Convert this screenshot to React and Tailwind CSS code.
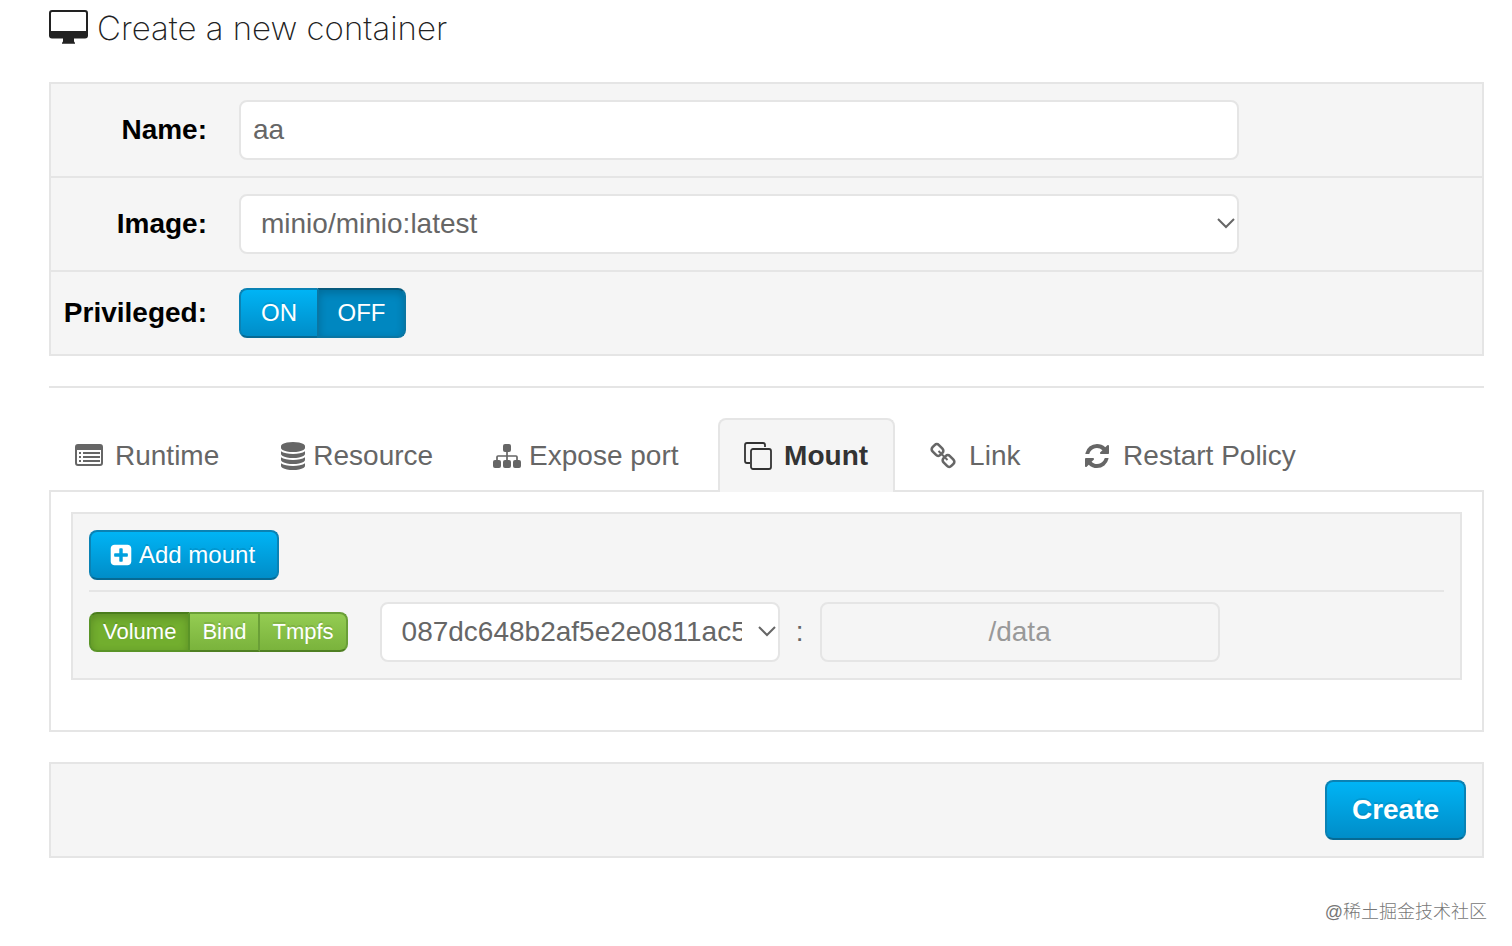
import React, { useState } from 'react';
import clsx from 'clsx';

const paths = {
  database: 'M896 768q237 0 443-43t325-127v170q0 69-103 128t-280 93.5-385 34.5-385-34.5-280-93.5-103-128v-170q119 84 325 127t443 43zm0 768q237 0 443-43t325-127v170q0 69-103 128t-280 93.5-385 34.5-385-34.5-280-93.5-103-128v-170q119 84 325 127t443 43zm0-384q237 0 443-43t325-127v170q0 69-103 128t-280 93.5-385 34.5-385-34.5-280-93.5-103-128v-170q119 84 325 127t443 43zm0-1152q208 0 385 34.5t280 93.5 103 128v128q0 69-103 128t-280 93.5-385 34.5-385-34.5-280-93.5-103-128v-128q0-69 103-128t280-93.5 385-34.5z',
  refresh: 'M1639 1056q0 5-1 7-64 268-268 434.5t-478 166.5q-146 0-282.5-55t-243.5-157l-129 129q-19 19-45 19t-45-19-19-45v-448q0-26 19-45t45-19h448q26 0 45 19t19 45-19 45l-137 137q71 66 161 102t187 36q134 0 250-65t186-179q11-17 53-117 8-23 30-23h192q13 0 22.5 9.5t9.5 22.5zm25-800v448q0 26-19 45t-45 19h-448q-26 0-45-19t-19-45 19-45l138-138q-148-137-349-137-134 0-250 65t-186 179q-11 17-53 117-8 23-30 23h-199q-13 0-22.5-9.5t-9.5-22.5v-7q65-268 270-434.5t480-166.5q146 0 284 55.5t245 156.5l130-129q19-19 45-19t45 19 19 45z',
  plus: 'M1408 960v-128q0-26-19-45t-45-19h-320v-320q0-26-19-45t-45-19h-128q-26 0-45 19t-19 45v320h-320q-26 0-45 19t-19 45v128q0 26 19 45t45 19h320v320q0 26 19 45t45 19h128q26 0 45-19t19-45v-320h320q26 0 45-19t19-45zm256-544v960q0 119-84.5 203.5t-203.5 84.5h-960q-119 0-203.5-84.5t-84.5-203.5v-960q0-119 84.5-203.5t203.5-84.5h960q119 0 203.5 84.5t84.5 203.5z',
};

const Glyph = ({ name, className }) => (
  <svg className={className} viewBox="0 0 1792 1792" fill="currentColor" aria-hidden="true">
    <path d={paths[name]} />
  </svg>
);

const DesktopIcon = () => (
  <svg className="w-10 h-9" viewBox="0 0 40 36" fill="#222" aria-hidden="true">
    <path fillRule="evenodd" d="M3 0h33a3 3 0 0 1 3 3v22.500a3 3 0 0 1-3 3H25v2.500q0 1 1 1.700v1H13v-1q1-.7 1-1.700v-2.500H3a3 3 0 0 1-3-3V3a3 3 0 0 1 3-3zM3.200 2Q2 2 2 3.200V21h35V3.200Q37 2 35.800 2z" />
  </svg>
);

const ListIcon = () => (
  <svg className="size-7" viewBox="0 0 28 28" aria-hidden="true">
    <rect x="1" y="3" width="26" height="20" rx="2" fill="none" stroke="currentColor" strokeWidth="2" />
    <path fill="currentColor" d="M1 3h26v5H1zM4 10h2v2H4zm4 0h17v2H8zm-4 4h2v2H4zm4 0h17v2H8zm-4 4h2v2H4zm4 0h17v2H8z" />
  </svg>
);

const SitemapIcon = () => (
  <svg className="size-7" viewBox="0 0 28 28" fill="currentColor" aria-hidden="true">
    <rect x="10" y="2" width="8" height="8" rx="2" />
    <rect x="0" y="18" width="8" height="8" rx="2" />
    <rect x="10" y="18" width="8" height="8" rx="2" />
    <rect x="20" y="18" width="8" height="8" rx="2" />
    <path d="M4 19v-4q0-1 1-1h18q1 0 1 1v4M14 9v10" fill="none" stroke="currentColor" strokeWidth="1.700" />
  </svg>
);

const CopyIcon = () => (
  <svg className="size-7" viewBox="0 0 28 28" fill="none" stroke="currentColor" strokeWidth="1.800" aria-hidden="true">
    <rect x="7" y="7" width="20" height="20" rx="2" />
    <path d="M6 21H3q-2 0-2-2V3q0-2 2-2h16q2 0 2 2v2" />
  </svg>
);

const ChainIcon = () => (
  <svg className="size-7" viewBox="0 0 28 28" fill="none" stroke="currentColor" strokeWidth="2.600" aria-hidden="true">
    <rect x="3" y="3.500" width="11" height="9" rx="3" transform="rotate(45 8.500 8)" />
    <rect x="14" y="14.500" width="11" height="9" rx="3" transform="rotate(45 19.500 19)" />
    <path d="M9.500 9l9 9" strokeWidth="2" />
  </svg>
);

const tabs = [
  { label: 'Runtime', icon: <ListIcon />, size: 'gap-3' },
  { label: 'Resource', icon: <Glyph name="database" className="size-7" />, size: 'gap-[6px]' },
  { label: 'Expose port', icon: <SitemapIcon />, size: 'gap-2 w-[243px]' },
  { label: 'Mount', icon: <CopyIcon />, size: 'gap-3 w-[177px]' },
  { label: 'Link', icon: <ChainIcon />, size: 'gap-3 w-[146px]' },
  { label: 'Restart Policy', icon: <Glyph name="refresh" className="size-7" />, size: 'gap-3' },
];

const blue = 'text-white border-2 border-[#0a82b4] border-b-[#066a94] bg-linear-to-b from-[#00b4f5] to-[#008dc8] [text-shadow:0_-2px_0_rgba(0,0,0,0.1)]';
const pressed = 'text-white border-2 border-[#0a76a3] border-t-[#075a7d] bg-[#0087c0] shadow-[inset_0_3px_8px_rgba(0,0,0,0.2)]';
const field = 'h-[60px] w-full rounded-lg border-2 border-[#e5e5e5] text-[28px] text-[#666]';

function Select({ id, label, className, value }) {
  return (
    <div className={clsx('relative', className)}>
      <select id={id} aria-label={label} className={clsx(field, 'appearance-none bg-white pl-5 pr-9')}>
        <option>{value}</option>
      </select>
      <svg className="pointer-events-none absolute right-1 top-6 h-3 w-[18px]" viewBox="0 0 18 12" fill="none" stroke="#666" strokeWidth="2" aria-hidden="true">
        <path d="M1 1l8 8 8-8" />
      </svg>
    </div>
  );
}

function Row({ label, id, children }) {
  return (
    <div className="flex items-center border-b-2 border-[#e5e5e5] px-3 py-4">
      <label htmlFor={id} className="w-36 text-right font-bold text-black">{label}</label>
      <div className="ml-8 flex-1">{children}</div>
    </div>
  );
}

export default function App() {
  const [privileged, setPrivileged] = useState(false);
  const [tab, setTab] = useState('Mount');
  const [type, setType] = useState('Volume');

  return (
    <div className="bg-white pl-[49px] pr-7 font-['Liberation_Sans',Arial,sans-serif] text-[28px] leading-10 text-[#666]">
      <h1 className="flex items-center gap-2 pt-2 font-['Inter',sans-serif] text-[33px] font-extralight text-[#222]">
        <DesktopIcon />
        Create a new container
      </h1>

      <div className="mt-[34px] border-2 border-b-0 border-[#e5e5e5] bg-[#f5f5f5]">
        <Row label="Name:" id="name">
          <input id="name" defaultValue="aa" className={clsx(field, 'max-w-[1000px] bg-white px-3')} />
        </Row>
        <Row label="Image:" id="image">
          <Select id="image" value="minio/minio:latest" className="max-w-[1000px]" />
        </Row>
        <Row label="Privileged:" id="privileged-off">
          <div className="flex text-2xl">
            <button
              onClick={() => setPrivileged(true)}
              className={clsx('h-[50px] w-[78px] rounded-l-lg border-r-0', privileged ? pressed : blue)}
            >
              ON
            </button>
            <button
              id="privileged-off"
              onClick={() => setPrivileged(false)}
              className={clsx('h-[50px] w-[89px] rounded-r-lg', privileged ? blue : pressed)}
            >
              OFF
            </button>
          </div>
        </Row>
      </div>

      <hr className="mt-[30px] border-t-2 border-[#e5e5e5]" />

      <div className="mt-[30px] flex pr-4" role="tablist">
        {tabs.map((t) => (
          <button
            key={t.label}
            role="tab"
            aria-selected={tab === t.label}
            onClick={() => setTab(t.label)}
            className={clsx(
              'mr-2 flex h-[74px] items-center whitespace-nowrap rounded-t-lg border-2 border-b-0 px-6',
              t.size,
              tab === t.label ? 'z-10 border-[#e5e5e5] bg-[#f5f5f5] font-bold text-[#333]' : 'border-transparent'
            )}
          >
            {t.icon}
            {t.label}
          </button>
        ))}
      </div>

      <div className="-mt-0.5 border-2 border-[#e5e5e5] px-5 pt-5 pb-[50px]">
        <div className="border-2 border-[#e5e5e5] bg-[#f5f5f5] p-4">
          <button className={clsx(blue, 'flex h-[50px] w-[190px] items-center gap-[6px] rounded-lg px-[18px] text-2xl whitespace-nowrap')}>
            <Glyph name="plus" className="size-6" />
            Add mount
          </button>
          <hr className="mt-[10px] mb-[10px] border-t-2 border-[#e5e5e5]" />
          <div className="flex items-center">
            <div className="flex text-[22px] leading-7">
              {['Volume', 'Bind', 'Tmpfs'].map((name) => (
                <button
                  key={name}
                  onClick={() => setType(name)}
                  className={clsx(
                    'h-10 border-2 border-l-0 px-3 text-white [text-shadow:0_-2px_0_rgba(0,0,0,0.1)] first:rounded-l-lg first:border-l-2 last:rounded-r-lg',
                    type === name
                      ? 'border-[#5a9427] border-t-[#4a7d1c] bg-[#72ae2e] shadow-[inset_0_3px_8px_rgba(0,0,0,0.2)]'
                      : 'border-[#6a9f37] border-b-[#4f7f22] bg-linear-to-b from-[#94cc52] to-[#7ab33c]'
                  )}
                >
                  {name}
                </button>
              ))}
            </div>
            <Select label="Volume source" value="087dc648b2af5e2e0811ac5d" className="ml-8 w-[400px]" />
            <span className="w-10 text-center">:</span>
            <input aria-label="Container path" disabled defaultValue="/data" className={clsx(field, 'max-w-[400px] bg-[#f5f5f5] text-center text-[#999]')} />
          </div>
        </div>
      </div>

      <div className="mt-[30px] flex justify-end border-2 border-[#e5e5e5] bg-[#f5f5f5] p-4">
        <button className={clsx(blue, 'h-[60px] w-[141px] rounded-lg font-bold')}>Create</button>
      </div>

      <p className="-mr-[3px] mt-10 text-right font-['Liberation_Sans','Noto_Sans_CJK_SC',sans-serif] text-lg leading-7 font-light text-[#777]">@稀土掘金技术社区</p>
    </div>
  );
}
